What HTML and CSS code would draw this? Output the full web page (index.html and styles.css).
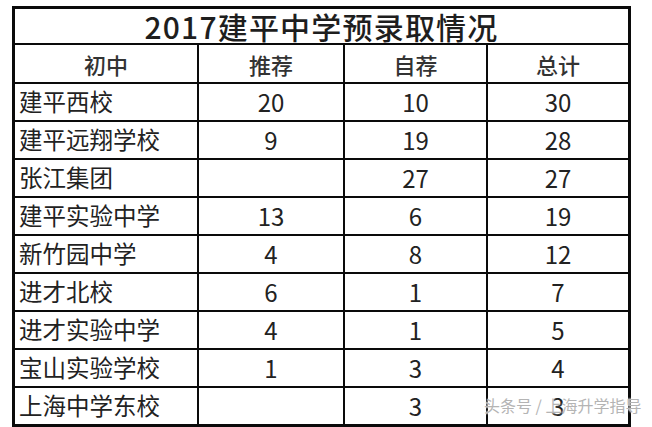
FILE: index.html
```html
<!DOCTYPE html>
<html lang="zh-CN">
<head>
<meta charset="utf-8">
<title>2017建平中学预录取情况</title>
<link rel="stylesheet" href="styles.css">
</head>
<body>
<div class="page">
  <div class="sheet">
    <div class="cell title">2017建平中学预录取情况</div>
    <div class="cell head">初中</div>
    <div class="cell head">推荐</div>
    <div class="cell head">自荐</div>
    <div class="cell head">总计</div>

    <div class="cell name">建平西校</div>
    <div class="cell num">20</div>
    <div class="cell num">10</div>
    <div class="cell num">30</div>

    <div class="cell name">建平远翔学校</div>
    <div class="cell num">9</div>
    <div class="cell num">19</div>
    <div class="cell num">28</div>

    <div class="cell name">张江集团</div>
    <div class="cell num"></div>
    <div class="cell num">27</div>
    <div class="cell num">27</div>

    <div class="cell name">建平实验中学</div>
    <div class="cell num">13</div>
    <div class="cell num">6</div>
    <div class="cell num">19</div>

    <div class="cell name">新竹园中学</div>
    <div class="cell num">4</div>
    <div class="cell num">8</div>
    <div class="cell num">12</div>

    <div class="cell name">进才北校</div>
    <div class="cell num">6</div>
    <div class="cell num">1</div>
    <div class="cell num">7</div>

    <div class="cell name">进才实验中学</div>
    <div class="cell num">4</div>
    <div class="cell num">1</div>
    <div class="cell num">5</div>

    <div class="cell name">宝山实验学校</div>
    <div class="cell num">1</div>
    <div class="cell num">3</div>
    <div class="cell num">4</div>

    <div class="cell name">上海中学东校</div>
    <div class="cell num"></div>
    <div class="cell num">3</div>
    <div class="cell num">3</div>
  </div>
  <div class="watermark">头条号 / 上海升学指导</div>
</div>
</body>
</html>
```

FILE: styles.css
```css
html, body {
  margin: 0;
  padding: 0;
  background: #ffffff;
}

body {
  width: 652px;
  height: 427px;
  overflow: hidden;
  font-family: "Noto Sans CJK SC", "Noto Sans", sans-serif;
  color: #1c1c1c;
}

.page {
  position: relative;
  width: 652px;
  height: 427px;
  padding: 6px 0 0 12px;
  box-sizing: border-box;
  overflow: hidden;
}

.sheet {
  display: grid;
  grid-template-columns: 182px 144px 141px 140px;
  grid-template-rows: 34px 37px repeat(9, 36px);
  gap: 2px;
  width: max-content;
  background: #0a0a0a;
  border: 3px solid #0a0a0a;
}

.cell {
  background: #ffffff;
  display: flex;
  align-items: center;
  justify-content: center;
  white-space: nowrap;
  line-height: 1;
}

.title {
  grid-column: 1 / -1;
  font-size: 30px;
  font-weight: 500;
  color: #1e1e1e;
  letter-spacing: 1.2px;
}

.head {
  font-size: 22px;
  font-weight: 500;
  color: #333333;
}

.name {
  justify-content: flex-start;
  padding-left: 4px;
  font-size: 23.5px;
  color: #222222;
}

.num {
  font-size: 24px;
  color: #222222;
}

.watermark {
  position: absolute;
  left: 484px;
  top: 396px;
  font-size: 16px;
  line-height: 1.2;
  white-space: nowrap;
  color: #b4b4b4;
  text-shadow: 0 0 2px #ffffff, 0 0 2px #ffffff;
}
```
